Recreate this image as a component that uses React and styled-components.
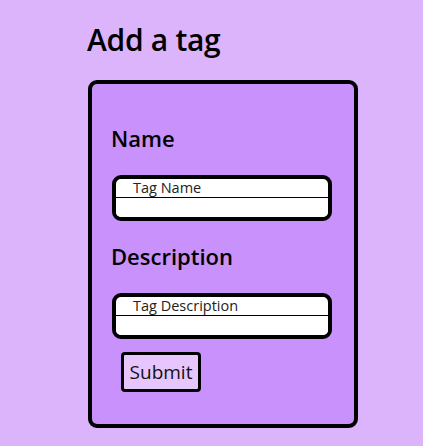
import styled, { createGlobalStyle } from "styled-components";

const GlobalStyle = createGlobalStyle`
  body {
    margin: 0;
    background: #dcb4fc;
    font-family: "Open Sans", "Noto Sans", sans-serif;
    color: #000;
  }
`;

const Page = styled.main`
  padding: 20px 0 0 87px;
`;

const Title = styled.h1`
  margin: 0;
  font-size: 30px;
  font-weight: 600;
  line-height: 40px;
  letter-spacing: -0.3px;
`;

const Card = styled.form`
  box-sizing: border-box;
  width: 270px;
  height: 348px;
  margin: 20px 0 0 1px;
  padding: 40px 20px 0;
  background: #c991fc;
  border: 4px solid #000;
  border-radius: 9px;
`;

const Label = styled.h3`
  margin: 0 0 0 -1px;
  font-size: 22px;
  font-weight: 600;
  line-height: 28px;
`;

const InputBox = styled.div`
  box-sizing: border-box;
  width: 220px;
  margin: ${(p) => p.$top}px 0 0;
  background: #fff;
  border: 4px solid #000;
  border-radius: 9px;
  overflow: hidden;
`;

const Caption = styled.label`
  display: block;
  padding-left: 17px;
  font-size: 14.5px;
  line-height: 18px;
  color: #222;
  border-bottom: 1px solid #000;
`;

const Field = styled.input`
  display: block;
  box-sizing: border-box;
  width: 100%;
  height: 19px;
  border: none;
  outline: none;
  background: #fff;
`;

const Spacer = styled.div`
  height: ${(p) => p.$h}px;
`;

const Submit = styled.button`
  box-sizing: border-box;
  width: 80px;
  height: 40px;
  margin: 13px 0 0 9px;
  padding: 0;
  background: #e6c6fc;
  border: 3px solid #000;
  border-radius: 4px;
  font-family: inherit;
  font-size: 19px;
  color: #111;
`;

function TextInput({ caption, top }) {
  return (
    <InputBox $top={top}>
      <Caption>{caption}</Caption>
      <Field type="text" />
    </InputBox>
  );
}

export default function App() {
  return (
    <>
      <GlobalStyle />
      <Page>
        <Title>Add a tag</Title>
        <Card onSubmit={(e) => e.preventDefault()}>
          <Label>Name</Label>
          <TextInput caption="Tag Name" top={23} />
          <Spacer $h={21} />
          <Label>Description</Label>
          <TextInput caption="Tag Description" top={23} />
          <Submit type="submit">Submit</Submit>
        </Card>
      </Page>
    </>
  );
}
